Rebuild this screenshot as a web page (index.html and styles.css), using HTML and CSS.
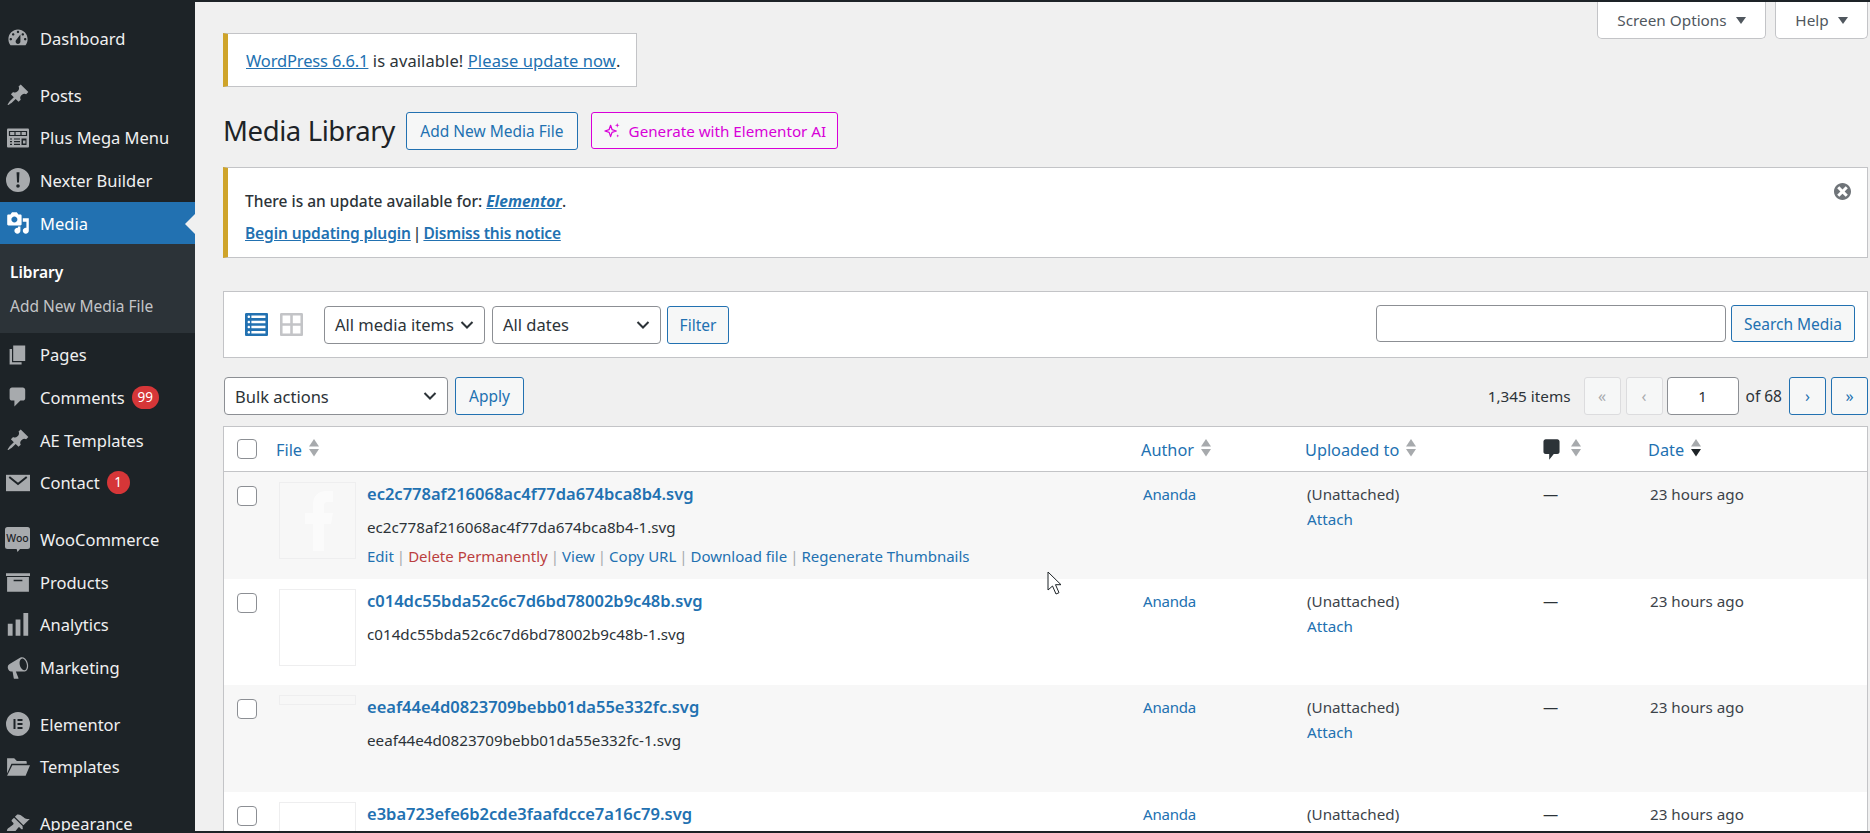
FILE: index.html
```html
<!DOCTYPE html>
<html lang="en">
<head>
<meta charset="utf-8">
<title>Media Library</title>
<link rel="stylesheet" href="styles.css">
</head>
<body>
<svg class="sprite" aria-hidden="true">
  <symbol id="i-pin" viewBox="0 0 20 20"><path d="M10.44 3.02l1.82-1.82 6.36 6.35-1.83 1.82c-1.05-.68-2.48-.57-3.41.36l-.75.75c-.92.93-1.04 2.35-.35 3.41l-1.83 1.82-2.41-2.41-2.8 2.79c-.42.42-3.38 2.71-3.8 2.29s1.86-3.39 2.28-3.81l2.79-2.79L4.1 9.36l1.83-1.82c1.05.69 2.48.57 3.4-.36l.75-.75c.93-.92 1.05-2.35.36-3.41z"/></symbol>
  <symbol id="i-chev" viewBox="0 0 14 10"><path d="M1.5 2l5.5 5.5L12.5 2" fill="none" stroke="#2c3338" stroke-width="2"/></symbol>
  <symbol id="i-sort" viewBox="0 0 12 20"><path d="M6 1l5 7.500H1z" fill="#a7aaad"/><path d="M1 11h10l-5 7.500z" fill="#a7aaad"/></symbol>
  <symbol id="i-sort-d" viewBox="0 0 12 20"><path d="M6 1l5 7.500H1z" fill="#a7aaad"/><path d="M1 11h10l-5 7.500z" fill="#1d2327"/></symbol>
  <symbol id="i-bubble" viewBox="0 0 20 20"><path d="M5 1h10c1.100 0 2 .9 2 2v9c0 1.100-.9 2-2 2h-3l-4 5v-5H5c-1.100 0-2-.9-2-2V3c0-1.100.9-2 2-2z"/></symbol>
</svg>

<div class="topline"></div>
<div class="shell">
  <nav class="side">
    <a class="item"><svg class="ico" viewBox="0 0 20 20"><path d="M3.760 16h12.480c1.100-1.370 1.760-3.110 1.760-5 0-4.420-3.580-8-8-8s-8 3.580-8 8c0 1.890.66 3.630 1.760 5zM10 4c.55 0 1 .45 1 1s-.45 1-1 1-1-.45-1-1 .45-1 1-1zM6 6c.55 0 1 .45 1 1s-.45 1-1 1-1-.45-1-1 .45-1 1-1zm8 0c.55 0 1 .45 1 1s-.45 1-1 1-1-.45-1-1 .45-1 1-1zm-5.370 5.550L12 7v6c0 1.100-.9 2-2 2s-2-.9-2-2c0-.57.24-1.080.63-1.450zM4 10c.55 0 1 .45 1 1s-.45 1-1 1-1-.45-1-1 .45-1 1-1zm12 0c.55 0 1 .45 1 1s-.45 1-1 1-1-.45-1-1 .45-1 1-1z"/></svg>Dashboard</a>
    <a class="item sep"><svg class="ico"><use href="#i-pin"/></svg>Posts</a>
    <a class="item"><svg class="ico" viewBox="0 0 24 24"><rect x="1" y="2.500" width="22" height="19" rx="1"/><path d="M3.500 5.500h17v4h-17zM9 5.500v4M15 5.500v4M8 13h6M8 15.700h6M8 18.400h6M4 13h2M4 15.700h2M4 18.400h2" fill="none" stroke="#1d2327" stroke-width="1.200"/><path d="M15.500 12.500h5v6.500h-5z" fill="#1d2327"/><path d="M17 14.500h2.500v3H17z"/></svg>Plus Mega Menu</a>
    <a class="item"><svg class="ico" viewBox="0 0 20 20"><path fill-rule="evenodd" d="M10 0a10 10 0 1 1 0 20 10 10 0 0 1 0-20zM8.800 3.500l.4 8.500h1.600l.4-8.500zM10 13.500a1.500 1.500 0 1 0 0 3 1.500 1.500 0 0 0 0-3z"/></svg>Nexter Builder</a>
    <a class="item current"><svg class="ico" viewBox="0 0 20 20"><path d="M13 11V4c0-.55-.45-1-1-1h-1.670L9 1H5L3.670 3H2c-.55 0-1 .45-1 1v7c0 .55.45 1 1 1h10c.55 0 1-.45 1-1zM7 4.500c1.380 0 2.500 1.120 2.500 2.500S8.380 9.500 7 9.500 4.500 8.380 4.500 7 5.620 4.500 7 4.500zM14 6h5v10.500c0 1.380-1.120 2.500-2.500 2.500S14 17.880 14 16.500s1.120-2.500 2.500-2.500c.17 0 .34.02.5.05V9h-3V6zm-4 8.050V13h2v3.500c0 1.380-1.120 2.500-2.500 2.500S7 17.880 7 16.500 8.120 14 9.500 14c.17 0 .34.02.5.05z"/></svg>Media</a>
    <div class="sub">
      <a class="sub-item on">Library</a>
      <a class="sub-item">Add New Media File</a>
    </div>
    <a class="item"><svg class="ico" viewBox="0 0 20 20"><path d="M6 15V2h10v13H6zm-1 1h8v2H3V5h2v11z"/></svg>Pages</a>
    <a class="item"><svg class="ico" viewBox="0 0 20 20"><path d="M5 2h9c1.100 0 2 .9 2 2v7c0 1.100-.9 2-2 2h-2l-5 5v-5H5c-1.100 0-2-.9-2-2V4c0-1.100.9-2 2-2z"/></svg>Comments<span class="badge wide">99</span></a>
    <a class="item"><svg class="ico"><use href="#i-pin"/></svg>AE Templates</a>
    <a class="item"><svg class="ico" viewBox="0 0 22 22"><rect y="3.500" width="22" height="15"/><path d="M3 5.500l8 6.500 8-6.500" fill="none" stroke="#1d2327" stroke-width="1.800"/></svg>Contact<span class="badge">1</span></a>
    <a class="item sep"><svg class="ico woo" viewBox="0 0 25 25"><rect width="25" height="22" rx="2.500"/><path d="M11.500 21.500h4l-3 3.500z"/><text class="woo-text" x="12.500" y="15">Woo</text></svg>WooCommerce</a>
    <a class="item"><svg class="ico" viewBox="0 0 22 20"><path fill-rule="evenodd" d="M0 2h22v2.500H0zM1 5.500h20V19H1zM7 8v1.200h8V8z"/></svg>Products</a>
    <a class="item"><svg class="ico" viewBox="0 0 20 20"><path d="M18.500 19V0h-4v19zm-6.500 0V5.500H8V19zm-6.500 0V9h-4v10z"/></svg>Analytics</a>
    <a class="item"><svg class="ico" viewBox="0 0 20 20"><path d="M18.150 5.940c.46 1.620.38 3.220-.02 4.480-.42 1.280-1.260 2.180-2.300 2.480-.16.06-.26.06-.4.06-.06.02-.12.02-.18.02-.06.02-.14.02-.22.02h-6.800l2.220 5.500c.02.14-.06.26-.14.34-.08.1-.24.16-.34.16H6.950c-.1 0-.26-.06-.34-.16-.08-.08-.16-.2-.14-.34l-1-5.500H4.250l-.02-.02c-.5.06-1.080-.18-1.540-.62s-.88-1.080-1.060-1.880c-.24-.8-.2-1.560-.02-2.200.18-.62.58-1.080 1.060-1.300l.02-.02 9-5.400c.1-.06.18-.1.24-.16.06-.04.14-.08.24-.12.16-.08.28-.12.5-.18 1.040-.3 2.240.1 3.220 1 .98.88 1.800 2.240 2.260 3.860zm-2.580 5.980h-.02c.4-.1.74-.34 1.040-.7.58-.7.86-1.760.86-3.040-.02-.64-.12-1.300-.3-1.960-.45-1.620-1.360-2.980-2.380-3.680-.34-.2-.7-.36-1.040-.4-.2-.02-.4 0-.58.06-.36.1-.7.32-.98.66-.6.7-.88 1.760-.86 3.040.02.64.12 1.300.3 1.980.46 1.600 1.380 2.960 2.400 3.660.34.24.68.38 1.020.42.2.02.38 0 .54-.04z"/></svg>Marketing</a>
    <a class="item sep"><svg class="ico" viewBox="0 0 24 24"><path fill-rule="evenodd" d="M12 0a12 12 0 1 1 0 24 12 12 0 0 1 0-24zM7.500 7v10h2V7zm4 0v2h5V7zm0 4v2h5v-2zm0 4v2h5v-2z"/></svg>Elementor</a>
    <a class="item"><svg class="ico" viewBox="0 0 22 20"><path d="M1 2h6.500L10 4.500h8c.6 0 1 .4 1 1V7H5L1 16zM5.800 8.500H22L18 18H1z"/></svg>Templates</a>
    <a class="item sep"><svg class="ico" viewBox="0 0 20 20"><path d="M14.480 11.060L7.410 3.990l1.500-1.500c.5-.56 2.300-.47 3.510.32 1.210.8 1.430 1.280 2.910 2.100 1.180.64 2.450 1.260 4.450.85zm-.71.71L6.700 4.700 4.930 6.470c-.39.39-.39 1.020 0 1.410l1.060 1.060c.39.39.39 1.030 0 1.420-.6.6-1.430 1.110-2.210 1.690-.35.26-.7.53-1.010.84C1.430 13.230 0 15.550 1.180 16.730c.3.3.6.34.76.5.16.16.5.36.81.66 1.180 1.180 3.500-.25 4.850-1.600.31-.31.58-.66.84-1.010.58-.78 1.090-1.610 1.690-2.210.39-.39 1.030-.39 1.420 0l1.060 1.060c.39.39 1.020.39 1.410 0z"/></svg>Appearance</a>
  </nav>

  <main class="main">
    <div class="tabs">
      <div class="tab opts">Screen Options<i class="caret"></i></div>
      <div class="tab help">Help<i class="caret"></i></div>
    </div>

    <div class="notice update"><a class="ul wp">WordPress 6.6.1</a> is available! <a class="ul">Please update now</a>.</div>

    <div class="head">
      <h1>Media Library</h1>
      <a class="btn add">Add New Media File</a>
      <a class="btn ai"><svg class="spark" viewBox="0 0 20 20"><path d="M8 4.500l1.500 4.500 4.500 1.500-4.500 1.500L8 16.500 6.500 12 2 10.500 6.500 9z" fill="none" stroke="#d800d8" stroke-width="1.300" stroke-linejoin="round"/><path d="M15 2l.6 1.900 1.900.6-1.900.6L15 7l-.6-1.900-1.900-.6 1.900-.6zM15.500 14l.4 1.300 1.300.4-1.300.4-.4 1.300-.4-1.300-1.300-.4 1.300-.4z" fill="#d800d8"/></svg>Generate with Elementor AI</a>
    </div>

    <div class="notice plugin">
      <p class="line1">There is an update available for: <a class="ul em">Elementor</a>.</p>
      <p class="line2"><a class="ul">Begin updating plugin</a> <span class="bar">|</span> <a class="ul dis">Dismiss this notice</a></p>
      <svg class="dismiss" viewBox="2 2 16 16"><path d="M10 2c4.420 0 8 3.580 8 8s-3.580 8-8 8-8-3.580-8-8 3.580-8 8-8zm5 11l-3-3 3-3-2-2-3 3-3-3-2 2 3 3-3 3 2 2 3-3 3 3z"/></svg>
    </div>

    <div class="filter">
      <svg class="view list" viewBox="1 1 18 18"><path d="M2 19h16c.55 0 1-.45 1-1V2c0-.55-.45-1-1-1H2c-.55 0-1 .45-1 1v16c0 .55.45 1 1 1zM4 3c.55 0 1 .45 1 1s-.45 1-1 1-1-.45-1-1 .45-1 1-1zm13 0v2H6V3h11zM4 7c.55 0 1 .45 1 1s-.45 1-1 1-1-.45-1-1 .45-1 1-1zm13 0v2H6V7h11zM4 11c.55 0 1 .45 1 1s-.45 1-1 1-1-.45-1-1 .45-1 1-1zm13 0v2H6v-2h11zM4 15c.55 0 1 .45 1 1s-.45 1-1 1-1-.45-1-1 .45-1 1-1zm13 0v2H6v-2h11z"/></svg>
      <svg class="view grid" viewBox="1 1 18 18"><path d="M2 1h16c.55 0 1 .45 1 1v16c0 .55-.45 1-1 1H2c-.55 0-1-.45-1-1V2c0-.55.45-1 1-1zm7.010 7.990v-6H3v6h6.010zm8 0v-6h-6v6h6zm-8 8.010v-6H3v6h6.010zm8 0v-6h-6v6h6z"/></svg>
      <div class="select s-media"><span>All media items</span><svg class="chev"><use href="#i-chev"/></svg></div>
      <div class="select s-dates"><span>All dates</span><svg class="chev"><use href="#i-chev"/></svg></div>
      <a class="btn filter-btn">Filter</a>
      <div class="search-box"></div>
      <a class="btn search-btn">Search Media</a>
    </div>

    <div class="nav">
      <div class="select s-bulk"><span>Bulk actions</span><svg class="chev"><use href="#i-chev"/></svg></div>
      <a class="btn apply">Apply</a>
      <span class="count">1,345 items</span>
      <a class="pg off">«</a>
      <a class="pg off">‹</a>
      <span class="pg-input">1</span>
      <span class="of">of 68</span>
      <a class="pg">›</a>
      <a class="pg">»</a>
    </div>

    <table class="files">
      <colgroup><col class="c1"><col class="c2"><col class="c3"><col class="c4"><col class="c5"><col class="c6"></colgroup>
      <thead>
        <tr>
          <th><span class="cb"></span></th>
          <th><a>File</a><svg class="sort"><use href="#i-sort"/></svg></th>
          <th><a>Author</a><svg class="sort"><use href="#i-sort"/></svg></th>
          <th><a>Uploaded to</a><svg class="sort"><use href="#i-sort"/></svg></th>
          <th class="cm"><svg class="bubble"><use href="#i-bubble"/></svg><svg class="sort"><use href="#i-sort"/></svg></th>
          <th><a>Date</a><svg class="sort"><use href="#i-sort-d"/></svg></th>
        </tr>
      </thead>
      <tbody>
        <tr>
          <td><span class="cb"></span></td>
          <td class="file">
            <div class="thumb"><svg class="logo-f" viewBox="0 0 30 60"><path d="M10 60V33H2V22h8v-8C10 5 15 0 23 0h7v11h-5c-3 0-4 1-4 4v7h9l-2 11h-7v27z"/></svg></div>
            <div class="meta">
              <a class="name">ec2c778af216068ac4f77da674bca8b4.svg</a>
              <p class="fn">ec2c778af216068ac4f77da674bca8b4-1.svg</p>
              <p class="acts"><a>Edit</a><i>|</i><a class="del">Delete Permanently</a><i>|</i><a>View</a><i>|</i><a>Copy URL</a><i>|</i><a>Download file</a><i>|</i><a>Regenerate Thumbnails</a></p>
            </div>
          </td>
          <td class="au"><a>Ananda</a></td>
          <td class="up">(Unattached)<a>Attach</a></td>
          <td class="dash">—</td>
          <td class="dt">23 hours ago</td>
        </tr>
        <tr>
          <td><span class="cb"></span></td>
          <td class="file">
            <div class="thumb"></div>
            <div class="meta">
              <a class="name">c014dc55bda52c6c7d6bd78002b9c48b.svg</a>
              <p class="fn">c014dc55bda52c6c7d6bd78002b9c48b-1.svg</p>
            </div>
          </td>
          <td class="au"><a>Ananda</a></td>
          <td class="up">(Unattached)<a>Attach</a></td>
          <td class="dash">—</td>
          <td class="dt">23 hours ago</td>
        </tr>
        <tr>
          <td><span class="cb"></span></td>
          <td class="file">
            <div class="thumb slim"></div>
            <div class="meta">
              <a class="name">eeaf44e4d0823709bebb01da55e332fc.svg</a>
              <p class="fn">eeaf44e4d0823709bebb01da55e332fc-1.svg</p>
            </div>
          </td>
          <td class="au"><a>Ananda</a></td>
          <td class="up">(Unattached)<a>Attach</a></td>
          <td class="dash">—</td>
          <td class="dt">23 hours ago</td>
        </tr>
        <tr>
          <td><span class="cb"></span></td>
          <td class="file">
            <div class="thumb"></div>
            <div class="meta">
              <a class="name">e3ba723efe6b2cde3faafdcce7a16c79.svg</a>
            </div>
          </td>
          <td class="au"><a>Ananda</a></td>
          <td class="up">(Unattached)</td>
          <td class="dash">—</td>
          <td class="dt">23 hours ago</td>
        </tr>
      </tbody>
    </table>
  </main>
</div>
<div class="bottomline"></div>

<svg class="cursor" viewBox="0 0 15 24"><path d="M1 1v18l4.500-4 3.500 8 3-1.300-3.500-8H14z" fill="#fff" stroke="#1d2327" stroke-width="1"/></svg>
</body>
</html>
```
FILE: styles.css
```css
* { box-sizing: border-box; }
html, body { margin: 0; height: 833px; overflow: hidden; }
body {
  display: flex;
  flex-direction: column;
  background: #f0f0f0;
  color: #2c3338;
  font-family: "Noto Sans", "Open Sans", sans-serif;
  font-size: 15px;
  position: relative;
}
p { margin: 0; }
a { color: #2271b1; }
.sprite { display: none; }
.topline, .bottomline { height: 2px; flex: none; background: #1d2327; }
.shell { flex: 1; display: flex; min-height: 0; overflow: hidden; }

/* sidebar */
.side { width: 195px; flex: none; background: #1d2327; padding-top: 15px; }
.item {
  height: 42.7px;
  display: flex;
  align-items: center;
  padding-left: 6px;
  color: #f0f0f1;
  font-size: 16.500px;
  position: relative;
}
.sep { margin-top: 14px; }
.ico { width: 24px; height: 24px; margin-right: 10px; fill: #a7aaad; flex: none; }
.woo { width: 25px; height: 25px; margin-left: -1px; }
.woo-text { fill: #1d2327; font-size: 10.500px; font-weight: 500; text-anchor: middle; }
.current { background: #2271b1; color: #fff; }
.current .ico { fill: #fff; }
.current::after {
  content: "";
  position: absolute;
  right: 0;
  top: 12px;
  border: 10px solid transparent;
  border-left-width: 0;
  border-right-color: #f0f0f0;
}
.sub { background: #2c3338; padding: 11px 0 10px; height: 89px; }
.sub-item {
  display: flex;
  align-items: center;
  height: 34px;
  padding-left: 10px;
  font-size: 15.500px;
  color: #c3c4c7;
}
.on { color: #fff; font-weight: 600; }
.badge {
  margin-left: 7px;
  min-width: 23px;
  height: 23px;
  padding: 0 3px;
  border-radius: 12px;
  background: #d63638;
  color: #fff;
  font-size: 13.500px;
  line-height: 23px;
  text-align: center;
}
.wide { min-width: 27px; }

/* main */
.main { flex: 1; min-width: 0; padding: 0 2px 0 28px; }
.tabs { height: 31px; display: flex; justify-content: flex-end; gap: 9px; align-items: flex-start; }
.tab {
  height: 37px;
  display: flex;
  align-items: center;
  justify-content: center;
  background: #fff;
  border: 1px solid #c3c4c7;
  border-top: 0;
  border-radius: 0 0 5px 5px;
  color: #50575e;
  font-size: 15.300px;
}
.opts { width: 169px; }
.help { width: 93px; }
.caret {
  margin-left: 9px;
  border: 5px solid transparent;
  border-top: 7px solid #50575e;
  border-bottom: 0;
}

.notice {
  background: #fff;
  border: 1px solid #c3c4c7;
  border-left: 5px solid #cfa42a;
}
.ul { text-decoration: underline; }
.update {
  width: 414px;
  height: 54px;
  padding-left: 18px;
  display: flex;
  align-items: center;
  white-space: pre;
  font-size: 16.500px;
  letter-spacing: .1px;
}
.wp { letter-spacing: -.15px; }
.head { display: flex; align-items: flex-start; margin-top: 25px; height: 38px; }
h1 {
  margin: 0 11px 0 0;
  font-size: 27.500px;
  font-weight: 400;
  line-height: 38px;
  color: #1d2327;
  letter-spacing: -.4px;
}
.btn {
  display: flex;
  align-items: center;
  justify-content: center;
  height: 38px;
  border: 1px solid #2271b1;
  border-radius: 3px;
  background: #f6f7f7;
  color: #2271b1;
  font-size: 15.500px;
}
.add { width: 172px; }
.ai { width: 247px; margin-left: 13px; height: 37px; border-color: #d800d8; color: #d800d8; font-size: 15.200px; }
.spark { width: 19px; height: 19px; margin-right: 7px; }

.plugin {
  position: relative;
  height: 91px;
  margin-top: 17px;
  padding: 22px 0 0 17px;
  font-weight: 500;
  font-size: 15.500px;
}
.line1 { line-height: 22px; }
.line2 { line-height: 22px; margin-top: 10px; }
.line1 .em { font-style: italic; font-weight: 700; }
.line2 .ul { font-weight: 600; letter-spacing: -.1px; }
.line2 .dis { letter-spacing: -.2px; }
.bar { margin: 0 -2px; }
.dismiss { position: absolute; right: 16px; top: 15px; width: 17px; height: 17px; fill: #6f7479; }

.filter {
  display: flex;
  align-items: center;
  height: 67px;
  margin-top: 33px;
  padding-left: 21px;
  background: #fff;
  border: 1px solid #c3c4c7;
}
.view { width: 23px; height: 23px; }
.list { fill: #2271b1; }
.grid { fill: #c3c4c7; margin-left: 12px; }
.select {
  display: flex;
  align-items: center;
  justify-content: space-between;
  height: 38px;
  padding: 0 10px;
  background: #fff;
  border: 1px solid #8c8f94;
  border-radius: 4px;
  color: #2c3338;
  font-size: 16.500px;
}
.chev { width: 14px; height: 10px; flex: none; }
.s-media { width: 161px; margin-left: 21px; }
.s-dates { width: 169px; margin-left: 7px; }
.filter-btn { width: 62px; margin-left: 6px; }
.search-box {
  width: 350px;
  height: 37px;
  margin: 0 0 2px auto;
  background: #fff;
  border: 1px solid #8c8f94;
  border-radius: 4px;
}
.search-btn { width: 124px; height: 37px; margin: 0 12px 2px 5px; }

.nav { display: flex; align-items: center; height: 38px; margin-top: 19px; }
.s-bulk { width: 224px; margin-left: 1px; }
.apply { width: 69px; margin-left: 7px; }
.count { margin-left: auto; margin-right: 13px; font-size: 15.300px; }
.pg {
  width: 37px;
  height: 38px;
  margin-right: 5px;
  display: flex;
  align-items: center;
  justify-content: center;
  border: 1px solid #2271b1;
  border-radius: 3px;
  background: #f6f7f7;
  font-size: 16px;
}
.pg:last-child { margin-right: 0; }
.off { border-color: #dcdcde; color: #a7aaad; }
.pg-input {
  width: 72px;
  height: 38px;
  display: flex;
  align-items: center;
  justify-content: center;
  margin-left: -1px;
  background: #fff;
  border: 1px solid #8c8f94;
  border-radius: 4px;
}
.of { margin: 0 7px; font-size: 15.500px; }

.files {
  width: 100%;
  margin-top: 11px;
  table-layout: fixed;
  border-collapse: separate;
  border-spacing: 0;
  background: #fff;
  border: 1px solid #c3c4c7;
  border-bottom: 0;
}
.c1 { width: 44px; }
.c2 { width: 865px; }
.c3 { width: 164px; }
.c4 { width: 236px; }
.c5 { width: 107px; }
th {
  height: 45px;
  padding: 0 0 0 8px;
  border-bottom: 1px solid #c3c4c7;
  text-align: left;
  font-weight: 400;
  font-size: 16.300px;
  white-space: nowrap;
}
th:first-child, td:first-child { padding: 0 0 0 13px; }
th a, th svg { vertical-align: middle; }
.cb {
  display: block;
  width: 20px;
  height: 20px;
  background: #fff;
  border: 1px solid #8c8f94;
  border-radius: 4px;
}
.sort { width: 12px; height: 20px; margin: 0 0 3px 6px; }
.bubble { width: 23px; height: 25px; margin-left: -2px; fill: #2c3338; }
.cm { padding-left: 9px; }
.cm .sort { margin-left: 7px; }

tbody tr { height: 107px; background: #f7f7f7; }
tbody tr:nth-child(even) { height: 106px; background: #fff; }
td {
  padding: 10px 0 0 10px;
  vertical-align: top;
  font-size: 15.200px;
  line-height: 24px;
  white-space: nowrap;
}
td:first-child { padding-top: 14px; }
.file { display: flex; gap: 11px; padding-left: 11px; }
.thumb {
  width: 77px;
  height: 77px;
  flex: none;
  border: 1px solid #eeeeef;
  display: flex;
  align-items: center;
  justify-content: center;
}
.slim { height: 10px; }
.logo-f { width: 32px; height: 60px; fill: #fff; opacity: .6; }
.name { display: block; font-size: 16.500px; font-weight: 600; line-height: 24px; }
.fn { margin-top: 9px; }
.acts { margin-top: 5px; font-size: 15px; color: #a7aaad; }
.acts i { font-style: normal; margin: 0 3px; }
.del { color: #bb3f3f; }
.up a { display: block; margin-top: 1px; }
.au { font-size: 15px; letter-spacing: -.2px; }
.au, .up, .dt { color: #3c434a; }

.cursor { position: absolute; left: 1047px; top: 571px; width: 15px; height: 24px; }
```
